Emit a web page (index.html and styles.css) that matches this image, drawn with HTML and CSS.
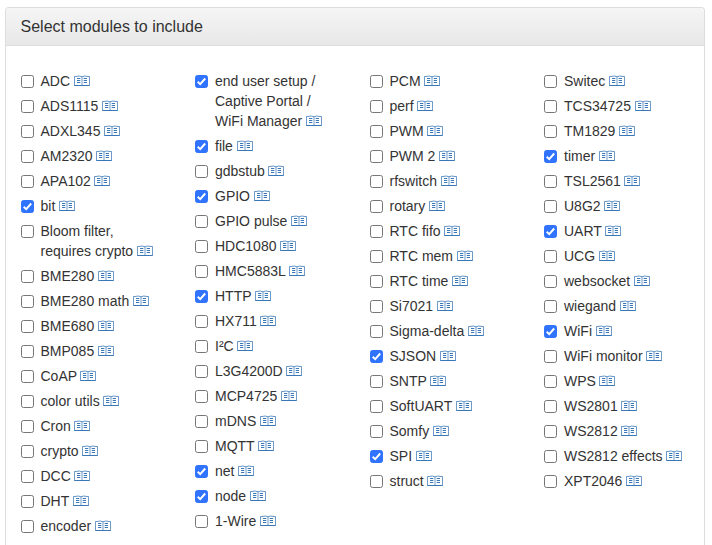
FILE: index.html
```html
<!DOCTYPE html>
<html lang="en">
<head>
<meta charset="utf-8">
<title>Select modules</title>
<link rel="stylesheet" href="styles.css">
</head>
<body>
<svg class="sprite" aria-hidden="true">
  <symbol id="book" viewBox="0 0 16 12">
    <path d="M0.5 10.5V1.5M15.5 10.5V1.5M8 1.8V10" fill="none" stroke="currentColor" stroke-width="0.7"/>
    <path d="M0.5 1.5H2Q5.5 0.4 8 1.8Q10.5 0.4 14 1.5H15.5" fill="none" stroke="currentColor" stroke-width="0.75"/>
    <path d="M0.3 10.5H15.7" stroke="currentColor" stroke-width="0.95"/>
    <path d="M3 3.5H6.3M3 5.5H6.3M3 7.5H6.3M9.7 3.5H13M9.7 5.5H13M9.7 7.5H13" stroke="currentColor" stroke-width="0.95"/>
  </symbol>
</svg>
<section class="panel">
  <header class="panel-heading">Select modules to include</header>
  <div class="panel-body" id="modules"></div>
</section>
<script src="modules.js"></script>
</body>
</html>
```
FILE: styles.css
```css
* { box-sizing: border-box; }
html { overflow: hidden; }
body {
  height: 545px;
  margin: 0;
  padding: 7px 7px 0 5px;
  font: 14px/20px "Liberation Sans", Arial, sans-serif;
  color: #333;
  background: #fff;
}
.sprite { display: none; }
.panel {
  height: 538px;
  border: 1px solid #ddd;
  border-bottom: 0;
  border-radius: 4px 4px 0 0;
}
.panel-heading {
  height: 38px;
  padding: 9px 14.5px;
  border-bottom: 1px solid #ddd;
  border-radius: 3px 3px 0 0;
  background: linear-gradient(#f5f5f5, #e8e8e8);
  font-size: 16px;
}
.panel-body {
  display: grid;
  grid-template-columns: repeat(4, 174.5px);
  padding: 25px 0 0 14.5px;
}
.module {
  display: flex;
  align-items: flex-start;
}
.module + .module { margin-top: 5px; }
.module-check {
  appearance: none;
  flex: none;
  width: 13px;
  height: 13px;
  margin: 4px 7px 0 0;
  border: 1px solid #767676;
  border-radius: 2.5px;
  background: #fff;
}
.module-check:checked {
  border-color: #2f73ff;
  background: #2f73ff url("data:image/svg+xml,%3Csvg xmlns='http://www.w3.org/2000/svg' viewBox='0 0 11 11'%3E%3Cpath d='M1.7 5.8L4.2 8.2L9.2 2.5' fill='none' stroke='white' stroke-width='1.9'/%3E%3C/svg%3E") center / 11px 11px no-repeat;
}
.module-name { white-space: pre-line; }
.book {
  width: 16px;
  height: 12px;
  margin-left: -0.3px;
  color: #2f70b3;
  vertical-align: -1px;
}
```
FILE: modules.js
```js
// A leading "*" marks a module that is selected by default.
const columns = [
  ["ADC", "ADS1115", "ADXL345", "AM2320", "APA102", "*bit", "Bloom filter,\nrequires crypto", "BME280", "BME280 math", "BME680", "BMP085", "CoAP", "color utils", "Cron", "crypto", "DCC", "DHT", "encoder"],
  ["*end user setup /\nCaptive Portal /\nWiFi Manager", "*file", "gdbstub", "*GPIO", "GPIO pulse", "HDC1080", "HMC5883L", "*HTTP", "HX711", "I²C", "L3G4200D", "MCP4725", "mDNS", "MQTT", "*net", "*node", "1-Wire"],
  ["PCM", "perf", "PWM", "PWM 2", "rfswitch", "rotary", "RTC fifo", "RTC mem", "RTC time", "Si7021", "Sigma-delta", "*SJSON", "SNTP", "SoftUART", "Somfy", "*SPI", "struct"],
  ["Switec", "TCS34725", "TM1829", "*timer", "TSL2561", "U8G2", "*UART", "UCG", "websocket", "wiegand", "*WiFi", "WiFi monitor", "WPS", "WS2801", "WS2812", "WS2812 effects", "XPT2046"]
];

document.getElementById("modules").innerHTML = columns.map(column => `
  <div class="column">${column.map(entry => {
    const checked = entry.startsWith("*");
    const name = checked ? entry.slice(1) : entry;
    return `<label class="module"><input class="module-check" type="checkbox"${checked ? " checked" : ""}><span class="module-name">${name} <svg class="book"><use href="#book"/></svg></span></label>`;
  }).join("")}</div>`).join("");
```
